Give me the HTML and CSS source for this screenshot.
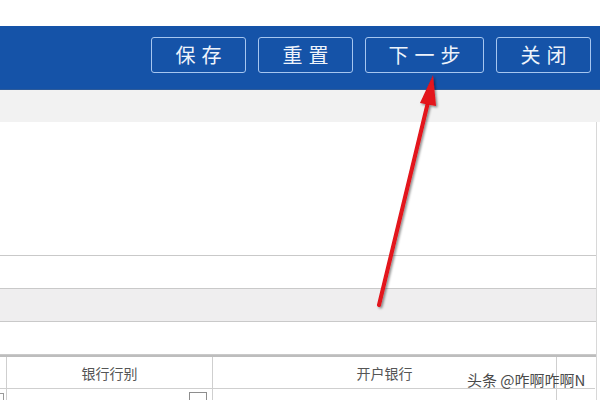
FILE: index.html
```html
<!DOCTYPE html>
<html lang="zh-CN">
<head>
    <meta charset="UTF-8">
    <title>下一步</title>
    <link rel="stylesheet" href="styles.css">
</head>
<body>
    <div class="top-strip"></div>

    <div class="toolbar">
        <button class="tool-btn">保存</button>
        <button class="tool-btn">重置</button>
        <button class="tool-btn wide">下一步</button>
        <button class="tool-btn">关闭</button>
    </div>

    <div class="sub-band"></div>

    <div class="panel">
        <div class="blank"></div>
        <div class="row"></div>
        <div class="row shade"></div>
        <div class="row"></div>

        <div class="grid">
            <div class="cell edge"></div>
            <div class="cell head">银行行别</div>
            <div class="cell head">开户银行</div>
            <div class="cell"></div>

            <div class="cell edge"><span class="stub"></span></div>
            <div class="cell body"><span class="pick"></span></div>
            <div class="cell body"></div>
            <div class="cell body"></div>
        </div>
    </div>

    <!-- red annotation arrow -->
    <svg class="arrow" width="600" height="400" viewBox="0 0 600 400">
        <defs>
            <filter id="shade" x="-20%" y="-20%" width="140%" height="140%">
                <feDropShadow dx="1.5" dy="1.5" stdDeviation="1.2" flood-color="#000" flood-opacity="0.45"/>
            </filter>
        </defs>
        <g filter="url(#shade)">
            <line x1="379" y1="305" x2="429" y2="98" stroke="#e3121a" stroke-width="4" stroke-linecap="round"/>
            <polygon points="433,75 420,103 436,106" fill="#e3121a"/>
        </g>
    </svg>

    <div class="mark">头条 @咋啊咋啊N</div>
</body>
</html>
```

FILE: styles.css
```css
body {
    margin: 0;
    width: 600px;
    height: 400px;
    overflow: hidden;
    position: relative;
    background: #ffffff;
    font-family: "Noto Sans CJK SC", "Liberation Sans", sans-serif;
}

.top-strip {
    height: 26px;
    background: #ffffff;
}

.toolbar {
    height: 64px;
    background: #1553a8;
    border-bottom: 1px solid #2d5b9a;
    display: flex;
    justify-content: flex-end;
    align-items: flex-start;
    gap: 12px;
    padding: 11px 9px 0 0;
    box-sizing: border-box;
}

.tool-btn {
    width: 95px;
    height: 36px;
    border: 1.5px solid #a6c6f0;
    border-radius: 3px;
    background: transparent;
    color: #eef3fb;
    font-family: "Noto Sans CJK SC", sans-serif;
    font-size: 20px;
    letter-spacing: 6px;
    text-indent: 6px;
    line-height: 1;
    padding: 0;
}

.tool-btn.wide {
    width: 119px;
}

.sub-band {
    height: 32px;
    background: #f2f2f2;
}

.panel {
    width: 596px;
    height: 278px;
    background: #ffffff;
    border-right: 1px solid #d8d8d8;
}

.blank {
    height: 133px;
    border-bottom: 1px solid #c9c9c9;
}

.row {
    height: 32px;
    border-bottom: 1px solid #c9c9c9;
}

.row.shade {
    background: #efeeef;
}

.row:last-of-type {
    height: 33px;
    border-bottom: none;
}

.grid {
    display: grid;
    grid-template-columns: 7px 206px 344px 38px;
    grid-template-rows: 32px 20px;
    border-top: 2px solid #bdbdbd;
}

.cell {
    border-right: 1px solid #cfcfcf;
    border-bottom: 1px solid #cfcfcf;
    position: relative;
}

.cell.head {
    display: flex;
    align-items: center;
    justify-content: center;
    font-size: 14px;
    color: #555555;
}

.cell.body {
    border-bottom: none;
}

.grid .cell:nth-child(4),
.grid .cell:nth-child(8) {
    border-right: none;
}

.stub {
    position: absolute;
    left: 0;
    top: 4px;
    width: 3px;
    height: 14px;
    border: 1px solid #9a9a9a;
    border-left: none;
}

.pick {
    position: absolute;
    left: 182px;
    top: 3px;
    width: 18px;
    height: 18px;
    border: 1px solid #8e8e8e;
    box-sizing: border-box;
}

.arrow {
    position: absolute;
    left: 0;
    top: 0;
    pointer-events: none;
}

.mark {
    position: absolute;
    left: 467px;
    top: 369px;
    font-family: "Noto Sans CJK SC", sans-serif;
    font-size: 15px;
    color: #4a4a4a;
    white-space: nowrap;
}
```
